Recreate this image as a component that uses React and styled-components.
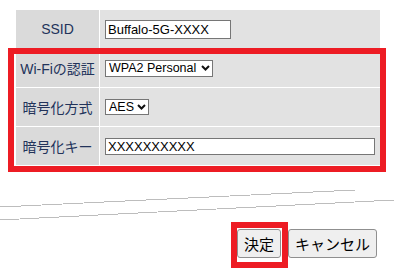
import React from 'react';
import styled, { createGlobalStyle } from 'styled-components';

const GlobalStyle = createGlobalStyle`
  html, body {
    margin: 0;
    padding: 0;
    background: #ffffff;
  }
  body {
    font-family: "Liberation Sans", "Noto Sans CJK JP", sans-serif;
  }
`;

const rows = [
  { label: 'SSID', kind: 'text', value: 'Buffalo-5G-XXXX', width: 126, height: 19 },
  { label: 'Wi-Fiの認証', kind: 'select', value: 'WPA2 Personal', width: 108, height: 17 },
  { label: '暗号化方式', kind: 'select', value: 'AES', width: 44, height: 16 },
  { label: '暗号化キー', kind: 'text', value: 'XXXXXXXXXX', width: 270, height: 17 },
];

const Chevron = () => (
  <svg width='9' height='6' viewBox='0 0 9 6'>
    <path d='M1 1 L4.5 4.5 L8 1' fill='none' stroke='#111' strokeWidth='2' />
  </svg>
);

const App = () => {
  return (
    <Page>
      <GlobalStyle />
      <SettingsTable>
        {rows.map((row) => (
          <React.Fragment key={row.label}>
            <LabelCell>{row.label}</LabelCell>
            <ValueCell>
              {row.kind === 'text' ? (
                <TextField
                  type='text'
                  defaultValue={row.value}
                  $width={row.width}
                  $height={row.height}
                />
              ) : (
                <SelectWrap>
                  <SelectField defaultValue={row.value} $width={row.width} $height={row.height}>
                    <option>{row.value}</option>
                  </SelectField>
                  <ArrowMark>
                    <Chevron />
                  </ArrowMark>
                </SelectWrap>
              )}
            </ValueCell>
          </React.Fragment>
        ))}
      </SettingsTable>
      <Highlight />

      <TearLines width='394' height='37' viewBox='0 0 394 37' shapeRendering='crispEdges'>
        <line x1='0' y1='22' x2='355' y2='5' stroke='#bdbdbd' strokeWidth='1' />
        <line x1='0' y1='35' x2='394' y2='15' stroke='#bdbdbd' strokeWidth='1' />
      </TearLines>

      <ButtonRow>
        <MarkedBox>
          <Button>決定</Button>
        </MarkedBox>
        <Button>キャンセル</Button>
      </ButtonRow>
    </Page>
  );
};

const Page = styled.div`
  position: relative;
  width: 394px;
  height: 270px;
  padding-top: 10px;
  box-sizing: border-box;
  overflow: hidden;
`;

const SettingsTable = styled.div`
  display: grid;
  grid-template-columns: 83px 280px;
  grid-auto-rows: 38px;
  gap: 1px;
  margin-left: 16px;
  width: 364px;
  background: #ffffff;
`;

const LabelCell = styled.div`
  display: flex;
  align-items: center;
  justify-content: center;
  background: #dadada;
  color: #22335a;
  font-size: 14px;
  font-family: "Liberation Sans", "Noto Sans CJK JP", sans-serif;
  white-space: nowrap;
`;

const ValueCell = styled.div`
  display: flex;
  align-items: center;
  padding-left: 5px;
  background: #e2e2e2;
`;

const TextField = styled.input`
  box-sizing: border-box;
  width: ${(p) => p.$width}px;
  height: ${(p) => p.$height}px;
  padding: 0 2px;
  border: 1px solid #767676;
  background: #ffffff;
  color: #000000;
  font-size: 13px;
  font-family: "Liberation Sans", sans-serif;
  outline: none;
`;

const SelectWrap = styled.div`
  position: relative;
  display: flex;
`;

const SelectField = styled.select`
  appearance: none;
  box-sizing: border-box;
  width: ${(p) => p.$width}px;
  height: ${(p) => p.$height}px;
  padding: 0 0 0 3px;
  border: 1px solid #767676;
  border-radius: 0;
  background: #ffffff;
  color: #000000;
  font-size: 12.5px;
  line-height: 15px;
  font-family: "Liberation Sans", sans-serif;
`;

const ArrowMark = styled.span`
  position: absolute;
  right: 3px;
  top: 50%;
  display: flex;
  transform: translateY(-50%);
  pointer-events: none;
`;

const Highlight = styled.div`
  position: absolute;
  left: 8px;
  top: 48px;
  width: 378px;
  height: 124px;
  box-sizing: border-box;
  border: 6px solid #ed1c24;
  pointer-events: none;
`;

const TearLines = styled.svg`
  display: block;
  margin-top: 20px;
`;

const ButtonRow = styled.div`
  display: flex;
  justify-content: flex-end;
  align-items: flex-start;
  padding-right: 17px;
`;

const MarkedBox = styled.div`
  display: flex;
  border: 6px solid #ed1c24;
  padding: 1px 1px 4px 0;
`;

const Button = styled.button`
  height: 29px;
  margin-top: 7px;
  padding: 0 6px;
  border: 1px solid #8f8f8f;
  border-radius: 3px;
  background: #efefef;
  color: #000000;
  font-size: 15px;
  font-family: "Noto Sans CJK JP", sans-serif;
  white-space: nowrap;

  ${MarkedBox} & {
    margin-top: 0;
  }
`;

export default App;
